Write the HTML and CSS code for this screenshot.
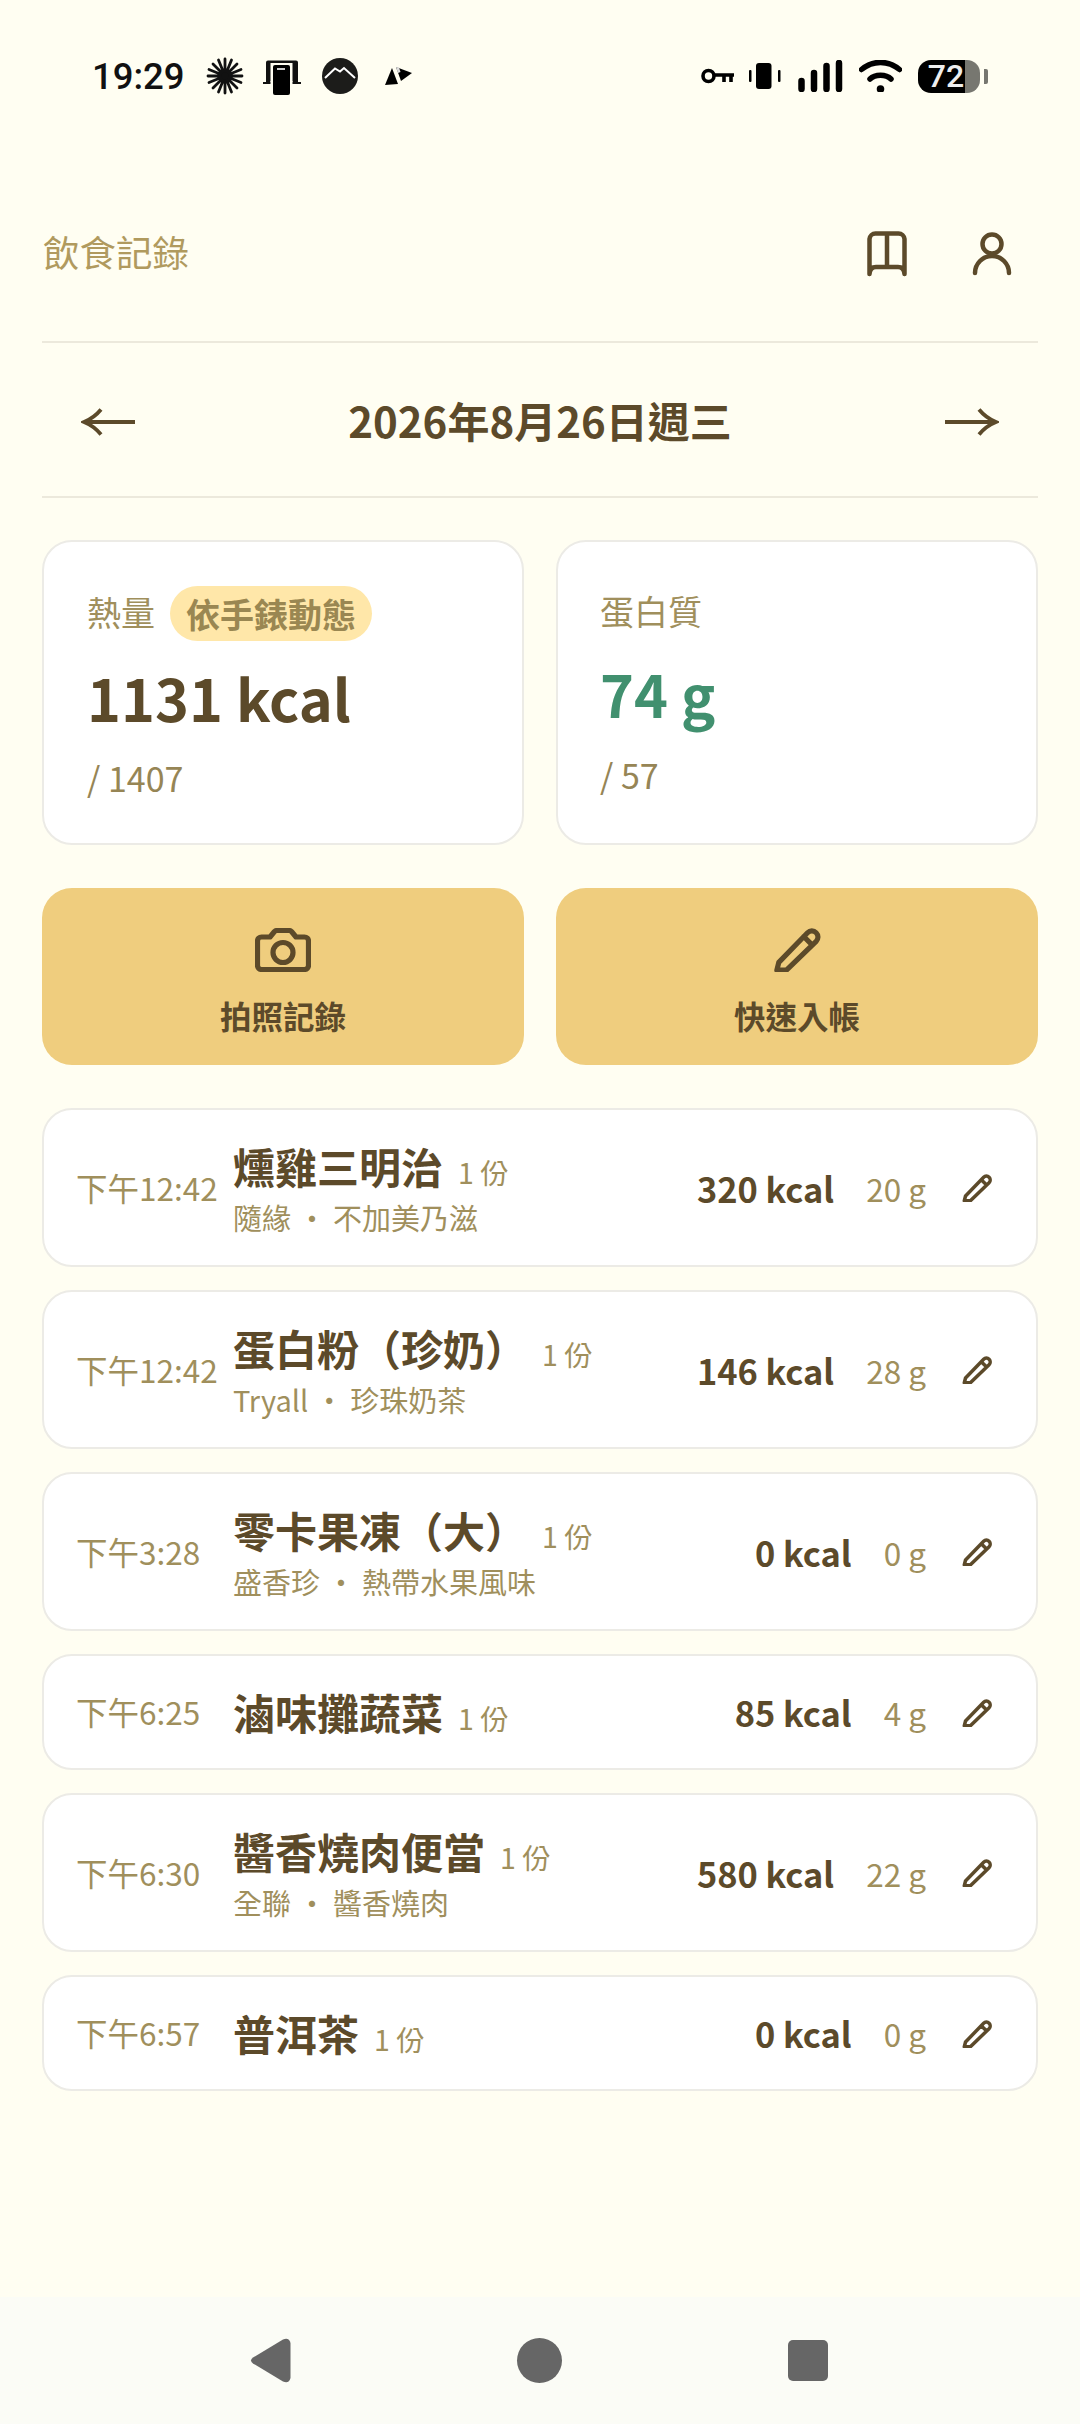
FILE: index.html
```html
<!DOCTYPE html>
<html lang="zh-Hant">
<head>
<meta charset="utf-8">
<title>飲食記錄</title>
<link rel="stylesheet" href="styles.css">
</head>
<body>
<div class="page">
  <div class="status">
    <span class="clock">19:29</span>
    <svg class="ic-burst" viewBox="0 0 38 38" fill="none" stroke="#111" stroke-width="2.800" stroke-linecap="round"><path d="M19 2V36M2 19H36M7 7L31 31M31 7L7 31M12.500 3L25.500 35M25.500 3L12.500 35M3 12.500L35 25.500M3 25.500L35 12.500"/><circle cx="19" cy="19" r="3.500" fill="#111" stroke="none"/></svg>
    <svg class="ic-phone" viewBox="0 0 40 37"><path d="M4 25V4.500A2 2 0 0 1 6 2.500H34A2 2 0 0 1 36 4.500V25" fill="#111"/><rect x="8.500" y="5" width="22" height="32" fill="#fffef2"/><path d="M1 25H39" stroke="#111" stroke-width="2"/><rect x="8.500" y="23" width="22" height="5" fill="#fffef2"/><rect x="11" y="7" width="17" height="30" rx="2" fill="#000"/><rect x="15" y="10" width="8" height="2" fill="#ccc"/></svg>
    <svg class="ic-mount" viewBox="0 0 36 36"><circle cx="18" cy="18" r="18" fill="#1c1c1a"/><path d="M3 20L13 10.500L18 13.500L22 10L33 20" fill="none" stroke="#fff" stroke-width="2"/></svg>
    <svg class="ic-play" viewBox="0 0 28 20"><path d="M0 19L7 2L13 18Z" fill="#000"/><path d="M11 1L27 7L16 15Z" fill="#000"/><path d="M11 1L14 1.500L15.500 6L13 7Z" fill="#ddd"/></svg>
    <span class="status-space"></span>
    <svg class="ic-key" viewBox="0 0 34 16" fill="none" stroke="#000" stroke-width="3.600"><circle cx="7.500" cy="8" r="5.500"/><path d="M13 7H33M23 7V14M30 7V14"/></svg>
    <svg class="ic-vib" viewBox="0 0 32 26"><rect x="7" y="0" width="15.500" height="26" rx="3" fill="#000"/><rect x="0" y="7" width="2.500" height="12" rx="1" fill="#000"/><rect x="29" y="7" width="2.500" height="12" rx="1" fill="#000"/></svg>
    <svg class="ic-signal" viewBox="0 0 45 32" stroke="#000" stroke-width="6.500" stroke-linecap="round"><path d="M3.500 21V29M16 13V29M28.500 6V29M41 3V29"/></svg>
    <svg class="ic-wifi" viewBox="0 0 43 32" fill="none" stroke="#000" stroke-width="5.500" stroke-linecap="round"><path d="M2.500 9.500C14 0 29 0 40.500 9.500M11 19C16 14 27 14 32 19"/><circle cx="21.500" cy="29" r="3.800" fill="#000" stroke="none"/></svg>
    <span class="battery">72</span><span class="battery-nub"></span>
  </div>

  <main class="content">
    <header class="topbar">
      <h1 class="title">飲食記錄</h1>
      <div class="top-icons">
        <svg class="ic-book" viewBox="0 0 40 46" fill="none" stroke="#5c4a2a" stroke-width="4.500" stroke-linecap="round" stroke-linejoin="round"><path d="M2.500 43V8A6 6 0 0 1 8.500 2.500H31.500A6 6 0 0 1 37.500 8V43M20 3V36M2.500 43Q3 36 9 36H31Q37 36 37.500 43"/></svg>
        <svg class="ic-user" viewBox="0 0 40 44" fill="none" stroke="#5c4a2a" stroke-width="4.500" stroke-linecap="round"><circle cx="20" cy="12" r="9.500"/><path d="M3 41A17 17 0 0 1 37 41"/></svg>
      </div>
    </header>

    <nav class="datebar">
      <svg class="ic-arrow" viewBox="0 0 54 28" fill="none" stroke="#5c4a2a" stroke-width="3.800"><path d="M54 14H3M20 1.500Q13 10 3 14Q13 18 20 26.500"/></svg>
      <span class="date">2026年8月26日週三</span>
      <svg class="ic-arrow" viewBox="0 0 54 28" fill="none" stroke="#5c4a2a" stroke-width="3.800"><path d="M0 14H51M34 1.500Q41 10 51 14Q41 18 34 26.500"/></svg>
    </nav>

    <section class="summary">
      <article class="stat">
        <div class="stat-label"><span class="label-text">熱量</span><span class="pill">依手錶動態</span></div>
        <div class="stat-value">1131 kcal</div>
        <div class="stat-sub">/ 1407</div>
      </article>
      <article class="stat">
        <div class="stat-label">蛋白質</div>
        <div class="stat-value green">74 g</div>
        <div class="stat-sub">/ 57</div>
      </article>
    </section>

    <section class="actions">
      <button class="action">
        <svg class="ic-camera" viewBox="0 0 56 44" fill="none" stroke="#5c4a2a" stroke-width="5.200" stroke-linejoin="round"><path d="M2.500 13A4 4 0 0 1 6.500 9H15L19.500 3.500Q20.500 2.500 22 2.500H34Q35.500 2.500 36.500 3.500L41 9H49.500A4 4 0 0 1 53.500 13V37.500A4 4 0 0 1 49.500 41.500H6.500A4 4 0 0 1 2.500 37.500Z"/><circle cx="28" cy="24.500" r="10"/></svg>
        <span>拍照記錄</span>
      </button>
      <button class="action">
        <svg class="ic-pencil-lg" viewBox="0 0 24 24" fill="none" stroke="#5c4a2a" stroke-width="2.700" stroke-linecap="round" stroke-linejoin="round"><path d="M1.500 23H6.500L22 8A2.900 2.900 0 0 0 17.500 3.500L2.500 19L1.500 23ZM15.500 5.500L20 10"/></svg>
        <span>快速入帳</span>
      </button>
    </section>

    <section class="list">
      <article class="row">
        <span class="time">下午12:42</span>
        <div class="food">
          <div class="food-head"><span class="name">燻雞三明治</span><span class="qty">1 份</span></div>
          <div class="food-sub">隨緣 ・ 不加美乃滋</div>
        </div>
        <span class="kcal">320 kcal</span><span class="gram">20 g</span>
        <svg class="ic-pencil" viewBox="0 0 24 24" fill="none" stroke="#5c4a2a" stroke-width="2.900" stroke-linecap="round" stroke-linejoin="round"><path d="M1.500 23H6.500L22 8A2.900 2.900 0 0 0 17.500 3.500L2.500 19L1.500 23ZM15.500 5.500L20 10"/></svg>
      </article>
      <article class="row">
        <span class="time">下午12:42</span>
        <div class="food">
          <div class="food-head"><span class="name">蛋白粉（珍奶）</span><span class="qty">1 份</span></div>
          <div class="food-sub">Tryall ・ 珍珠奶茶</div>
        </div>
        <span class="kcal">146 kcal</span><span class="gram">28 g</span>
        <svg class="ic-pencil" viewBox="0 0 24 24" fill="none" stroke="#5c4a2a" stroke-width="2.900" stroke-linecap="round" stroke-linejoin="round"><path d="M1.500 23H6.500L22 8A2.900 2.900 0 0 0 17.500 3.500L2.500 19L1.500 23ZM15.500 5.500L20 10"/></svg>
      </article>
      <article class="row">
        <span class="time">下午3:28</span>
        <div class="food">
          <div class="food-head"><span class="name">零卡果凍（大）</span><span class="qty">1 份</span></div>
          <div class="food-sub">盛香珍 ・ 熱帶水果風味</div>
        </div>
        <span class="kcal">0 kcal</span><span class="gram">0 g</span>
        <svg class="ic-pencil" viewBox="0 0 24 24" fill="none" stroke="#5c4a2a" stroke-width="2.900" stroke-linecap="round" stroke-linejoin="round"><path d="M1.500 23H6.500L22 8A2.900 2.900 0 0 0 17.500 3.500L2.500 19L1.500 23ZM15.500 5.500L20 10"/></svg>
      </article>
      <article class="row">
        <span class="time">下午6:25</span>
        <div class="food">
          <div class="food-head"><span class="name">滷味攤蔬菜</span><span class="qty">1 份</span></div>
        </div>
        <span class="kcal">85 kcal</span><span class="gram">4 g</span>
        <svg class="ic-pencil" viewBox="0 0 24 24" fill="none" stroke="#5c4a2a" stroke-width="2.900" stroke-linecap="round" stroke-linejoin="round"><path d="M1.500 23H6.500L22 8A2.900 2.900 0 0 0 17.500 3.500L2.500 19L1.500 23ZM15.500 5.500L20 10"/></svg>
      </article>
      <article class="row">
        <span class="time">下午6:30</span>
        <div class="food">
          <div class="food-head"><span class="name">醬香燒肉便當</span><span class="qty">1 份</span></div>
          <div class="food-sub">全聯 ・ 醬香燒肉</div>
        </div>
        <span class="kcal">580 kcal</span><span class="gram">22 g</span>
        <svg class="ic-pencil" viewBox="0 0 24 24" fill="none" stroke="#5c4a2a" stroke-width="2.900" stroke-linecap="round" stroke-linejoin="round"><path d="M1.500 23H6.500L22 8A2.900 2.900 0 0 0 17.500 3.500L2.500 19L1.500 23ZM15.500 5.500L20 10"/></svg>
      </article>
      <article class="row">
        <span class="time">下午6:57</span>
        <div class="food">
          <div class="food-head"><span class="name">普洱茶</span><span class="qty">1 份</span></div>
        </div>
        <span class="kcal">0 kcal</span><span class="gram">0 g</span>
        <svg class="ic-pencil" viewBox="0 0 24 24" fill="none" stroke="#5c4a2a" stroke-width="2.900" stroke-linecap="round" stroke-linejoin="round"><path d="M1.500 23H6.500L22 8A2.900 2.900 0 0 0 17.500 3.500L2.500 19L1.500 23ZM15.500 5.500L20 10"/></svg>
      </article>
    </section>
  </main>

  <footer class="navbar">
    <svg class="nav-back" viewBox="0 0 41 45"><path d="M3 19.500L33 1.500Q39 -1 40.500 5V40Q39 46 33 43.500L3 25.500Q-1 22.500 3 19.500Z" fill="#666"/></svg>
    <span class="nav-home"></span>
    <span class="nav-recent"></span>
  </footer>
</div>
</body>
</html>
```

FILE: styles.css
```css
* { box-sizing: border-box; }
html, body { margin: 0; padding: 0; }
body {
  background: #fffef2;
  font-family: "Noto Sans CJK TC", "Noto Sans", sans-serif;
  color: #5c4a2a;
}
.page { width: 1080px; height: 2424px; display: flex; flex-direction: column; overflow: hidden; }

/* status bar */
.status { height: 110px; padding: 42px 92px 0 92px; display: flex; align-items: center; flex: none; }
.clock { font-family: Roboto, sans-serif; font-weight: 500; font-size: 36.500px; color: #111; width: 114px; }
.ic-burst { width: 38px; height: 38px; margin-right: 18px; }
.ic-phone { width: 40px; height: 37px; margin-right: 20px; }
.ic-mount { width: 36px; height: 36px; margin-right: 27px; }
.ic-play { width: 28px; height: 20px; }
.status-space { flex: 1; }
.ic-key { width: 34px; height: 16px; margin-right: 14px; }
.ic-vib { width: 32px; height: 26px; margin-right: 17px; }
.ic-signal { width: 45px; height: 32px; margin-right: 16px; }
.ic-wifi { width: 43px; height: 32px; margin-right: 16px; }
.battery {
  width: 62px; height: 33px; border-radius: 13px;
  background: linear-gradient(90deg, #000 76%, #777770 76%);
  color: #eee; font: 500 32px/33px Roboto, sans-serif; text-align: center; padding-right: 6px;
}
.battery-nub { width: 4px; height: 15px; background: #777770; margin-left: 4px; border-radius: 0 2px 2px 0; }

/* content */
.content { flex: 1; padding: 0 42px; }
.topbar {
  display: flex; align-items: center; justify-content: space-between;
  height: 233px; padding: 110px 26px 53px 1px;
  border-bottom: 2px solid #ece9dc;
}
.title { margin: 0 0 4px; font-size: 36.500px; font-weight: 400; color: #b09a5e; line-height: 64px; }
.top-icons { display: flex; gap: 65px; align-items: center; }
.ic-book { width: 40px; height: 46px; }
.ic-user { width: 40px; height: 44px; }

.datebar {
  display: flex; align-items: center; justify-content: space-between;
  height: 155px; padding: 3px 39px 0;
  border-bottom: 2px solid #ece9dc;
}
.ic-arrow { width: 54px; height: 28px; margin-top: 2px; }
.date { font-size: 42px; font-weight: 700; line-height: 60px; color: #5c4a2a; margin-top: -2px; }

.summary { display: grid; grid-template-columns: 482px 482px; gap: 32px; margin-top: 42px; }
.stat {
  height: 305px; background: #fff; border: 2px solid #ecebe6; border-radius: 30px;
  padding: 44px 43px 0;
}
.stat:last-child { padding-left: 42px; }
.stat-label { display: flex; align-items: center; gap: 15px; font-size: 34px; line-height: 55px; color: #a08f5c; min-height: 50px; }
.stat:last-child .stat-label { line-height: 50px; }
.label-text { margin-top: -5px; }
.pill {
  background: #ffe7a9; color: #9a8752; font-weight: 700; font-size: 34px; line-height: 55px;
  padding: 0 16px; border-radius: 28px;
}
.stat-value { font-size: 57.600px; font-weight: 700; line-height: 86px; margin-top: 13px; color: #5c4a2a; }
.stat-value.green { color: #41906f; margin-top: 14px; }
.stat-sub { font-size: 34px; line-height: 50px; color: #968555; margin-top: 13px; }
.stat:last-child .stat-sub { margin-top: 14px; }

.actions { display: grid; grid-template-columns: 482px 482px; gap: 32px; margin-top: 43px; }
.action {
  height: 177px; border: 0; border-radius: 30px; background: #efcd7e; color: #5c4a2a;
  display: flex; flex-direction: column; align-items: center; padding: 40px 0 0;
  font-family: inherit; font-size: 31.500px; font-weight: 700; line-height: 46px;
}
.action span { margin-top: 20px; }
.ic-camera { width: 56px; height: 44px; }
.ic-pencil-lg { width: 48px; height: 46px; margin-top: -2px; }

.list { display: flex; flex-direction: column; gap: 23px; margin-top: 43px; }
.row {
  display: flex; align-items: center; background: #fff; border: 2px solid #ecebe6; border-radius: 30px;
  padding: 29px 44px 29px 32px;
}
.time { width: 157px; flex: none; font-size: 31.500px; line-height: 44px; color: #a08f5c; margin-top: -2px; }
.food { flex: 1; min-width: 0; }
.food-head { display: flex; align-items: baseline; gap: 15px; height: 54px; }
.name { font-size: 42px; font-weight: 700; line-height: 54px; color: #5c4a2a; }
.qty { font-size: 28.500px; color: #a08f5c; line-height: 30px; }
.food-sub { font-size: 29px; line-height: 38px; margin-top: 5px; color: #a08f5c; white-space: nowrap; }
.kcal { font-size: 34.400px; font-weight: 700; line-height: 50px; color: #5c4a2a; margin-right: 32px; }
.gram { font-size: 31.500px; line-height: 50px; color: #a08f5c; margin-right: 36px; }
.ic-pencil { width: 30px; height: 29px; flex: none; }

/* system nav */
.navbar {
  flex: none; height: 127px; background: #fbfcf6;
  display: flex; align-items: center; justify-content: space-between;
  padding: 0 252px 0 250px;
}
.nav-back { width: 41px; height: 45px; }
.nav-home { width: 45px; height: 45px; background: #666; border-radius: 50%; }
.nav-recent { width: 40px; height: 41px; background: #666; border-radius: 5px; }
```
